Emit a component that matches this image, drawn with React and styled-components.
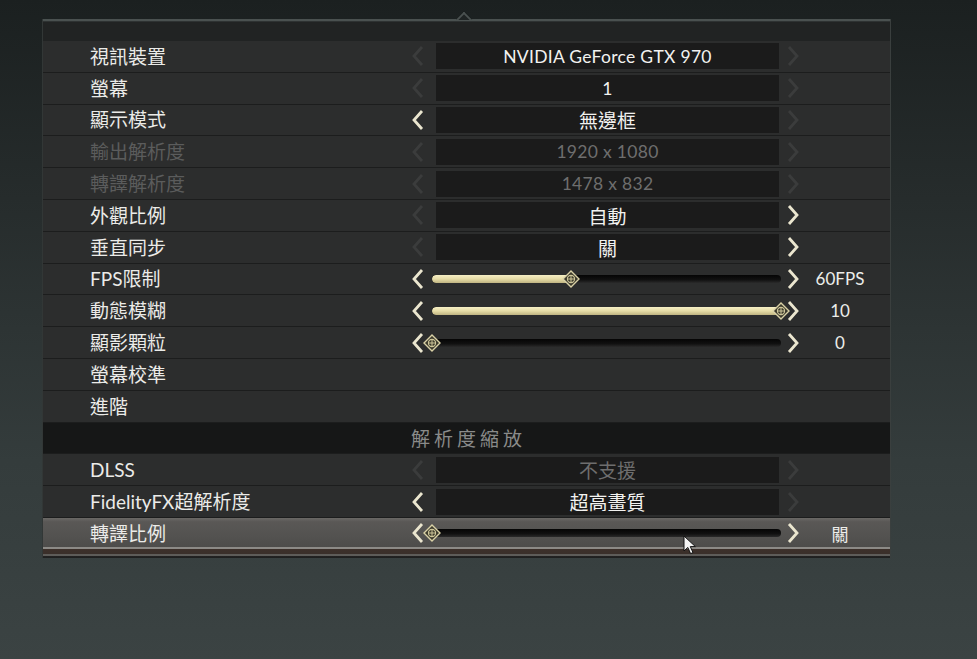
import React from "react";
import styled, { createGlobalStyle } from "styled-components";

const GlobalStyle = createGlobalStyle`
  html, body {
    margin: 0;
    padding: 0;
  }
  body {
    width: 977px;
    height: 659px;
    overflow: hidden;
    background: linear-gradient(180deg, #1b2020 0%, #262c2c 30%, #343c3c 70%, #3b4343 100%);
    font-family: "Lato", "Noto Sans CJK TC", sans-serif;
  }
`;

const ROWS = [
  { label: "視訊裝置", value: "NVIDIA GeForce GTX 970", left: false, right: false, latin: true },
  { label: "螢幕", value: "1", left: false, right: false, latin: true },
  { label: "顯示模式", value: "無邊框", left: true, right: false },
  { label: "輸出解析度", value: "1920 x 1080", left: false, right: false, disabled: true, latin: true },
  { label: "轉譯解析度", value: "1478 x 832", left: false, right: false, disabled: true, latin: true },
  { label: "外觀比例", value: "自動", left: false, right: true },
  { label: "垂直同步", value: "關", left: false, right: true },
  { label: "FPS限制", slider: 0.397, extra: "60FPS" },
  { label: "動態模糊", slider: 1, extra: "10" },
  { label: "顯影顆粒", slider: 0, extra: "0" },
  { label: "螢幕校準" },
  { label: "進階" },
];

const ROWS2 = [
  { label: "DLSS", value: "不支援", left: false, right: false, dimValue: true },
  { label: "FidelityFX超解析度", value: "超高畫質", left: true, right: false },
  { label: "轉譯比例", slider: 0, extra: "關", selected: true },
];

const Chevron = ({ dir, active }) => (
  <ArrowCell $dir={dir}>
    <svg width="13" height="22" viewBox="0 0 13 22">
      <path
        d={dir === "left" ? "M11 2 L3 11 L11 20" : "M2 2 L10 11 L2 20"}
        fill="none"
        stroke={active ? "#ebe6cf" : "#3b3c3c"}
        strokeWidth="2.8"
        strokeLinejoin="miter"
      />
    </svg>
  </ArrowCell>
);

const Thumb = () => (
  <svg width="18" height="18" viewBox="0 0 18 18">
    <path d="M9 1 L17 9 L9 17 L1 9 Z" fill="#3c3a2c" stroke="#d9d1a6" strokeWidth="1.4" />
    <circle cx="9" cy="9" r="3.6" fill="none" stroke="#cfc79a" strokeWidth="1.1" />
    <path d="M9 5.4 V12.6 M5.4 9 H12.6" stroke="#cfc79a" strokeWidth="1" />
  </svg>
);

const Slider = ({ value }) => (
  <SliderWrap>
    <Track>
      <Fill style={{ width: `${value * 100}%` }} />
    </Track>
    <ThumbHolder style={{ left: `${value * 100}%` }}>
      <Thumb />
    </ThumbHolder>
  </SliderWrap>
);

const Row = ({ row }) => {
  const hasControl = row.value !== undefined || row.slider !== undefined;
  const isSlider = row.slider !== undefined;
  return (
    <RowBox $selected={row.selected}>
      <Label $disabled={row.disabled}>{row.label}</Label>
      {hasControl && (
        <>
          <Chevron dir="left" active={isSlider || row.left} />
          {isSlider ? (
            <Slider value={row.slider} />
          ) : (
            <ValueBox $dim={row.disabled || row.dimValue} $latin={row.latin}>
              {row.value}
            </ValueBox>
          )}
          <Chevron dir="right" active={isSlider || row.right} />
          <Extra>{row.extra}</Extra>
        </>
      )}
    </RowBox>
  );
};

const Cursor = () => (
  <CursorMark>
    <svg width="14" height="20" viewBox="0 0 14 20">
      <path d="M1 1 L1 16 L4.8 12.4 L7.6 18.6 L10 17.6 L7.3 11.6 L12.4 11.6 Z" fill="#f4f4f4" stroke="#111" strokeWidth="1" />
    </svg>
  </CursorMark>
);

const App = () => {
  return (
    <Page>
      <GlobalStyle />
      <Panel>
        <TopRule />
        <HeaderStrip />
        <List>
          {ROWS.map((r) => (
            <Row key={r.label} row={r} />
          ))}
          <SectionHeader>解析度縮放</SectionHeader>
          {ROWS2.map((r) => (
            <Row key={r.label} row={r} />
          ))}
        </List>
        <BottomEdge />
        <Cursor />
      </Panel>
    </Page>
  );
};

const Page = styled.div`
  padding: 19px 0 0 43px;
`;

const Panel = styled.div`
  position: relative;
  width: 847px;
  background: #1d1f1f;
  box-shadow: 1px 0 0 #3a3f3e, -1px 0 0 #323736;
`;

const TopRule = styled.div`
  position: relative;
  height: 2px;
  background: #4a5150;

  &::after {
    content: "";
    position: absolute;
    left: 415px;
    top: -5px;
    width: 10px;
    height: 10px;
    border-top: 2px solid #4a5150;
    border-left: 2px solid #4a5150;
    background: #1f2424;
    transform: rotate(45deg);
    clip-path: polygon(0 0, 100% 0, 0 100%);
  }
`;

const HeaderStrip = styled.div`
  height: 19px;
  background: #212323;
  border-top: 1px solid #2e3232;
`;

const List = styled.div`
  display: flex;
  flex-direction: column;
  gap: 1px;
  background: #1c1d1d;
`;

const RowBox = styled.div`
  display: grid;
  grid-template-columns: 315px 31px 343px 31px 60px;
  align-items: center;
  height: 30.8px;
  padding: 0 20px 0 47px;
  background: ${(p) =>
    p.$selected
      ? "linear-gradient(180deg, #6b6966 0%, #5a5856 12%, #535250 60%, #4c4b49 100%)"
      : "#2c2d2d"};
  box-shadow: ${(p) => (p.$selected ? "inset 0 -2px 0 #8c8a86" : "none")};
`;

const Label = styled.div`
  font-size: 19px;
  color: ${(p) => (p.$disabled ? "#5b5c5c" : "#ebebe8")};
  white-space: nowrap;
  line-height: 1;
`;

const ArrowCell = styled.div`
  display: flex;
  align-items: center;
  padding-left: ${(p) => (p.$dir === "left" ? "6px" : "8px")};
  height: 100%;
`;

const ValueBox = styled.div`
  height: 26px;
  background: #1b1b1b;
  display: flex;
  align-items: center;
  justify-content: center;
  font-size: ${(p) => (p.$latin ? "17.5px" : "19px")};
  letter-spacing: ${(p) => (p.$latin ? "0.3px" : "0")};
  color: ${(p) => (p.$dim ? "#6e6e6e" : "#f2f2f0")};
  white-space: nowrap;
`;

const SliderWrap = styled.div`
  position: relative;
  height: 26px;
  margin: 0 -2px 0 -4px;
  display: flex;
  align-items: center;
`;

const Track = styled.div`
  position: relative;
  width: 100%;
  height: 8px;
  border-radius: 4px;
  background: linear-gradient(180deg, #050505 0%, #111 60%, #2a2a2a 100%);
  overflow: hidden;
`;

const Fill = styled.div`
  height: 100%;
  border-radius: 4px;
  background: linear-gradient(180deg, #f6efc6 0%, #e6dca6 50%, #bfb482 100%);
`;

const ThumbHolder = styled.div`
  position: absolute;
  top: 4px;
  margin-left: -9px;
  width: 18px;
  height: 18px;
`;

const Extra = styled.div`
  text-align: center;
  font-size: 17px;
  color: #ededea;
  white-space: nowrap;
`;

const SectionHeader = styled.div`
  height: 30.8px;
  display: flex;
  align-items: center;
  justify-content: center;
  background: #161717;
  color: #8a8b8a;
  font-size: 19px;
  letter-spacing: 4px;
  text-indent: 4px;
`;

const BottomEdge = styled.div`
  height: 9px;
  background: linear-gradient(180deg, #3c302a 0%, #3a2f2a 50%, #5e5c59 58%, #5e5c59 75%, #222 80%, #1e1f1f 100%);
`;

const CursorMark = styled.div`
  position: absolute;
  left: 640px;
  top: 516px;
  width: 14px;
  height: 20px;
`;

export default App;
